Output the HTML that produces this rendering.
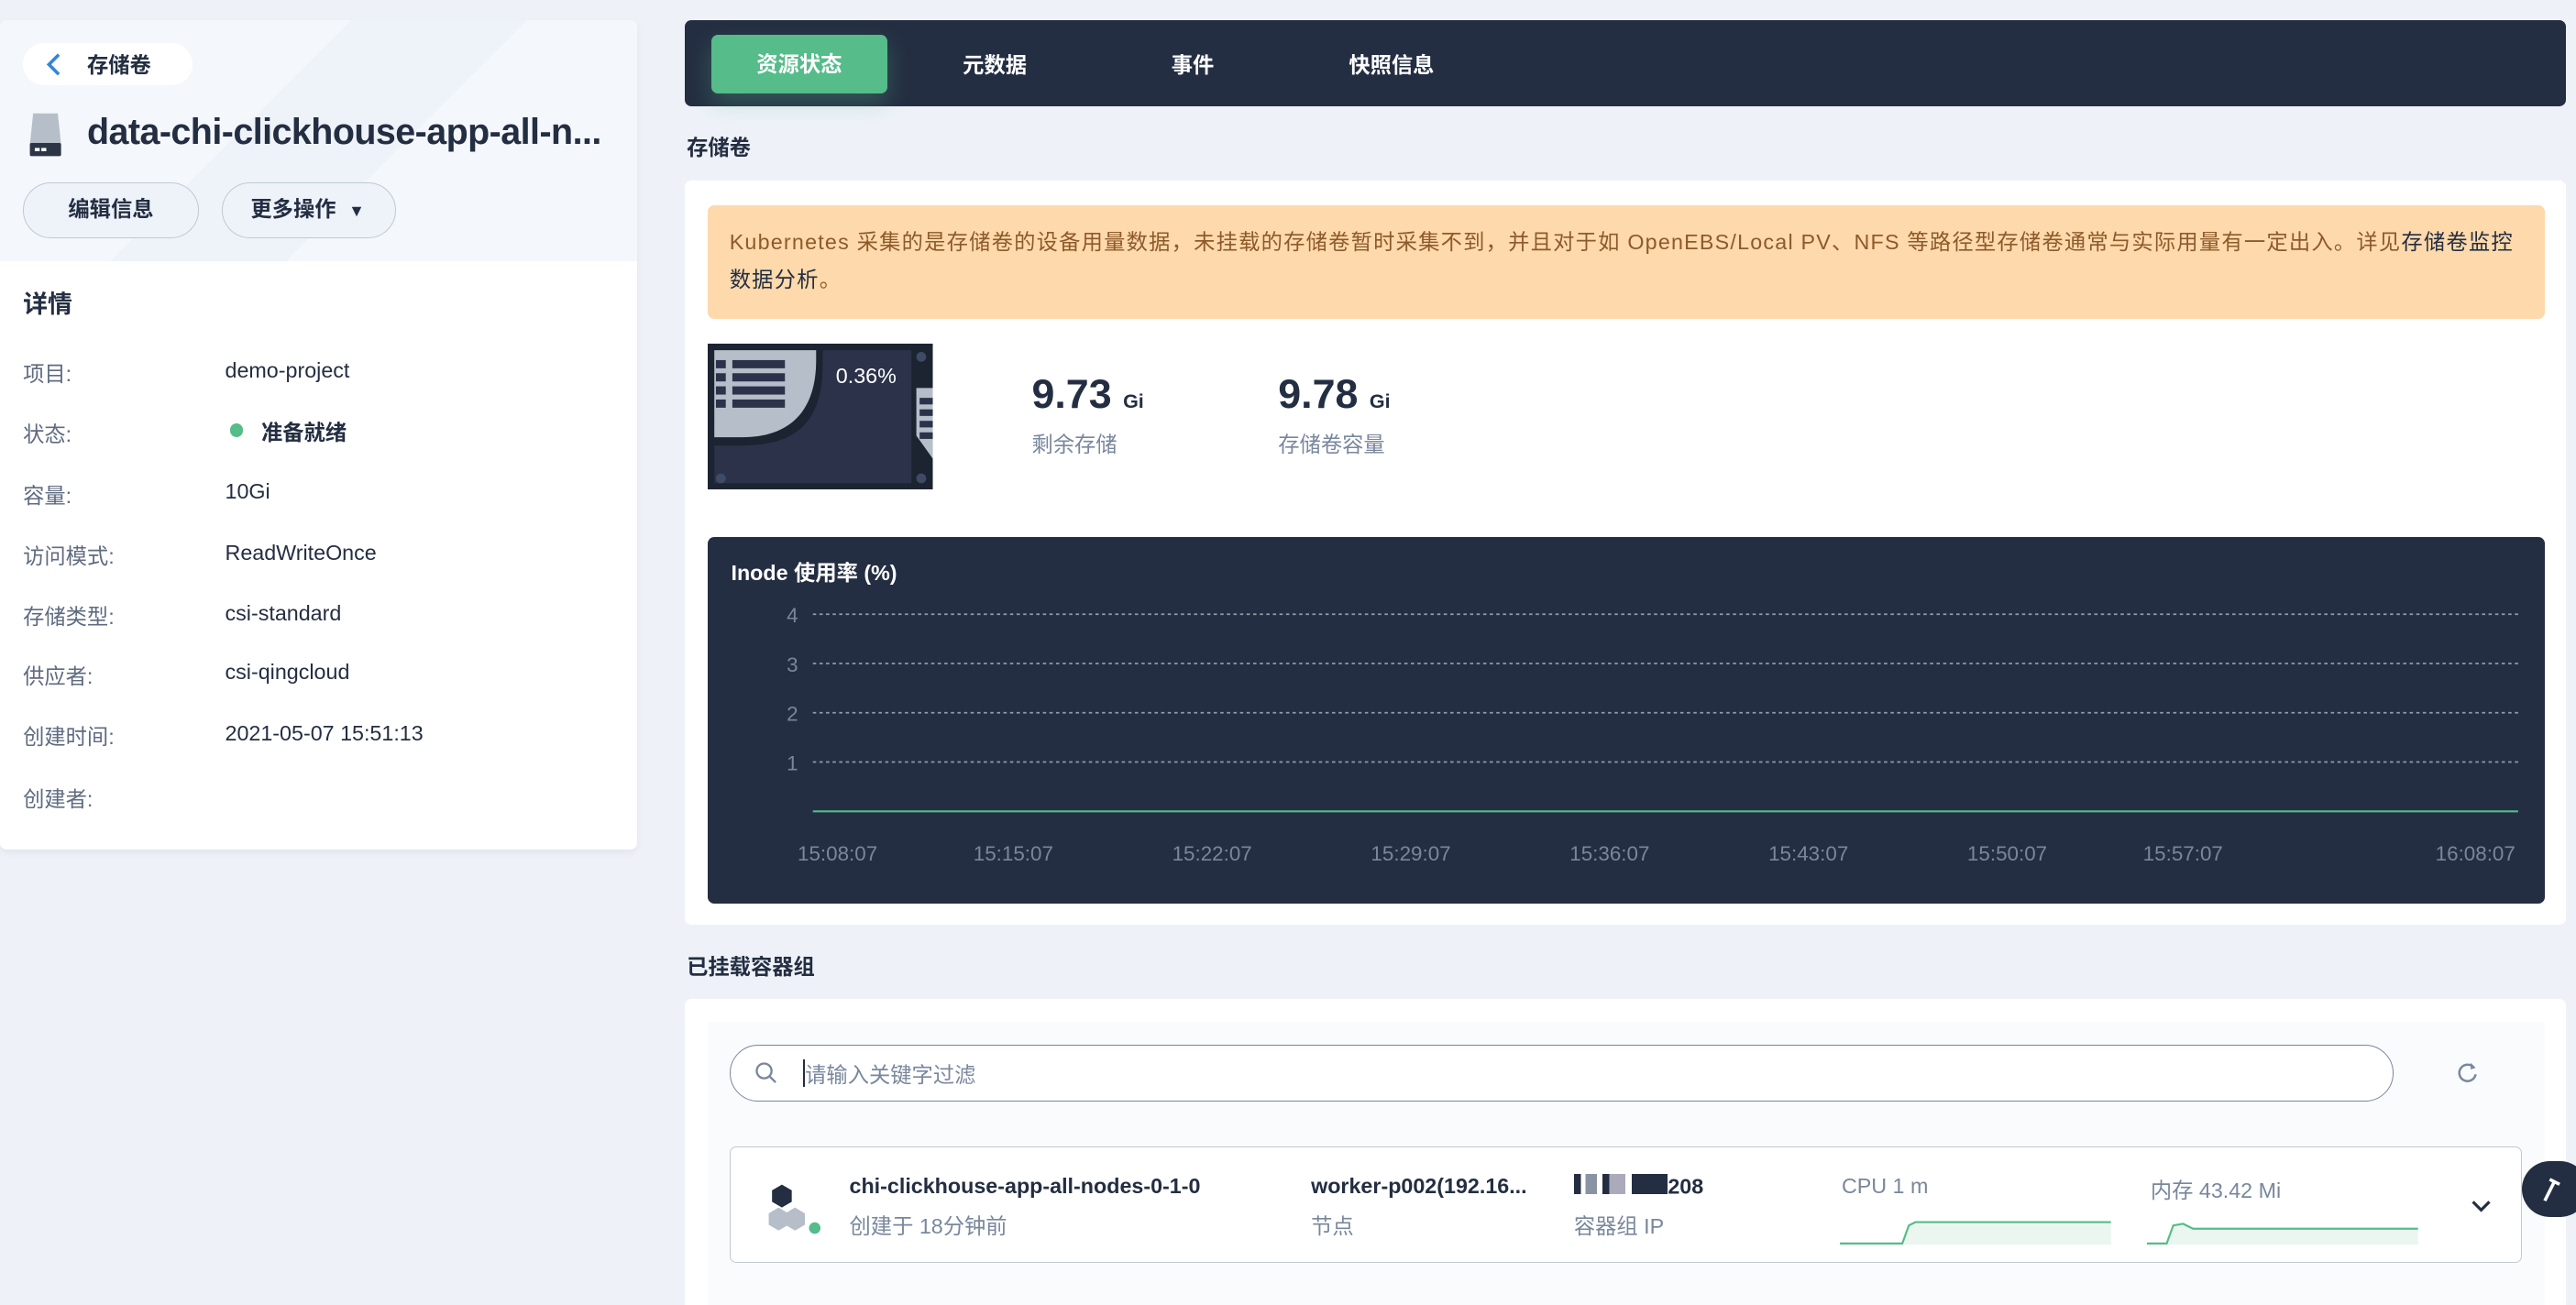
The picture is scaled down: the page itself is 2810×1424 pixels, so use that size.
<!DOCTYPE html>
<html><head><meta charset="utf-8">
<style>
*{box-sizing:border-box;margin:0;padding:0}
html,body{width:2810px;height:1424px;overflow:hidden;background:#eef2f8}
#z{zoom:1.7921;width:1568px;height:795px;position:relative;font-family:"Liberation Sans","Noto Sans CJK SC",sans-serif;color:#242e42}
.a{position:absolute;white-space:nowrap}
.lbl{font-size:13px;color:#5f6b80}
.val{font-size:13px;color:#242e42}
</style></head><body><div id="z">
<!-- left panel -->
<div class="a" style="left:0;top:12px;width:388px;height:505px;background:#fff;border-radius:4px;box-shadow:0 2px 4px rgba(36,46,66,.06);overflow:hidden">
 <div class="a" style="left:0;top:0;width:388px;height:147px;background:linear-gradient(135deg,#f4f7fb 40%,#eef3f9 40%,#eef3f9 60%,#f4f7fb 60%)"></div>
</div>
<div class="a" style="left:14px;top:26px;width:103px;height:26px;background:#fff;border-radius:13px"></div>
<svg class="a" style="left:27px;top:31px" width="12" height="16" viewBox="0 0 12 16"><path d="M9 2 L3 8 L9 14" fill="none" stroke="#3385d6" stroke-width="2"/></svg>
<div class="a" style="left:53px;top:29px;font-size:13px;font-weight:bold;color:#242e42">存储卷</div>
<svg class="a" style="left:16px;top:68px" width="24" height="28" viewBox="0 0 24 28"><path d="M4 1h15l2 19H2z" fill="#b6bec9"/><rect x="2" y="19" width="19" height="8" rx="1" fill="#2c3546"/><rect x="5" y="22" width="3" height="2" fill="#fff"/><rect x="9" y="22" width="3" height="2" fill="#fff"/></svg>
<div class="a" style="left:53px;top:68px;font-size:22px;font-weight:bold;letter-spacing:-0.3px">data-chi-clickhouse-app-all-n...</div>
<div class="a" style="left:14px;top:111px;width:107px;height:34px;border:1px solid #c1c9d1;border-radius:17px;background:#eef3fa;font-size:13px;font-weight:bold;text-align:center;line-height:32px">编辑信息</div>
<div class="a" style="left:135px;top:111px;width:106px;height:34px;border:1px solid #c1c9d1;border-radius:17px;background:#eef3fa;font-size:13px;font-weight:bold;line-height:32px;padding-left:17px">更多操作 <span style="font-size:10px;margin-left:4px">▼</span></div>
<div class="a" style="left:14px;top:173px;font-size:15px;font-weight:bold">详情</div>
<div class="a lbl" style="left:14px;top:217px">项目:</div><div class="a val" style="left:137px;top:218px">demo-project</div>
<div class="a lbl" style="left:14px;top:254px">状态:</div><div class="a" style="left:140px;top:258px;width:8px;height:8px;border-radius:50%;background:#55bc8a"></div><div class="a val" style="left:159px;top:253px;font-weight:bold">准备就绪</div>
<div class="a lbl" style="left:14px;top:291px">容量:</div><div class="a val" style="left:137px;top:292px">10Gi</div>
<div class="a lbl" style="left:14px;top:328px">访问模式:</div><div class="a val" style="left:137px;top:329px">ReadWriteOnce</div>
<div class="a lbl" style="left:14px;top:365px">存储类型:</div><div class="a val" style="left:137px;top:366px">csi-standard</div>
<div class="a lbl" style="left:14px;top:401px">供应者:</div><div class="a val" style="left:137px;top:402px">csi-qingcloud</div>
<div class="a lbl" style="left:14px;top:438px">创建时间:</div><div class="a val" style="left:137px;top:439px">2021-05-07 15:51:13</div>
<div class="a lbl" style="left:14px;top:476px">创建者:</div>

<!-- tabs -->
<div class="a" style="left:417px;top:12px;width:1145px;height:53px;background:#242e42;border-radius:4px"></div>
<div class="a" style="left:433px;top:21px;width:107px;height:36px;background:#55bc8a;border-radius:4px;color:#fff;font-size:13px;font-weight:bold;text-align:center;line-height:36px;box-shadow:0 6px 14px rgba(85,188,138,.3)">资源状态</div>
<div class="a" style="left:586px;top:29px;color:#fff;font-size:13px;font-weight:bold">元数据</div>
<div class="a" style="left:713px;top:29px;color:#fff;font-size:13px;font-weight:bold">事件</div>
<div class="a" style="left:821px;top:29px;color:#fff;font-size:13px;font-weight:bold">快照信息</div>

<div class="a" style="left:418px;top:79px;font-size:13px;font-weight:bold">存储卷</div>
<div class="a" style="left:417px;top:110px;width:1145px;height:453px;background:#fff;border-radius:4px"></div>
<div class="a" style="left:431px;top:125px;width:1118px;height:69px;background:#fed9ab;border-radius:4px;font-size:13px;color:#8d5a2a;line-height:23px;padding:11px 13px;white-space:nowrap;letter-spacing:0.68px">Kubernetes 采集的是存储卷的设备用量数据，未挂载的存储卷暂时采集不到，并且对于如 OpenEBS/Local PV、NFS 等路径型存储卷通常与实际用量有一定出入。详见<span style="color:#242e42">存储卷监控</span><br><span style="color:#242e42">数据分析</span>。</div>
<!-- disk -->
<svg class="a" style="left:431px;top:209px" width="137" height="89" viewBox="0 0 137 89"><rect width="137" height="89" fill="#1c2331"/><rect x="4" y="4" width="120" height="81" fill="#2b3249"/><path d="M4 4h66v8c0 40-20 50-50 50H4z" fill="#1c2331"/><path d="M4 4h62v6c0 30-15 47-45 47H4z" fill="#b6bec9"/><g fill="#2b3249"><rect x="5" y="10" width="6" height="5"/><rect x="15" y="10" width="32" height="5"/><rect x="5" y="18" width="6" height="5"/><rect x="15" y="18" width="32" height="5"/><rect x="5" y="26" width="6" height="5"/><rect x="15" y="26" width="32" height="5"/><rect x="5" y="34" width="6" height="5"/><rect x="15" y="34" width="32" height="5"/></g><path d="M127 27h10v43l-10-14z" fill="#b6bec9"/><g fill="#2b3249"><rect x="129" y="33" width="8" height="4"/><rect x="129" y="40" width="8" height="4"/><rect x="129" y="47" width="8" height="4"/><rect x="129" y="54" width="8" height="4"/></g><circle cx="130" cy="8" r="3" fill="#3f4a66"/><circle cx="8" cy="82" r="3" fill="#3f4a66"/><circle cx="130" cy="82" r="3" fill="#3f4a66"/><text x="78" y="24" fill="#fff" font-size="13" font-family="Liberation Sans">0.36%</text></svg>
<div class="a" style="left:628px;top:226px;font-size:25px;font-weight:bold">9.73 <span style="font-size:12px">Gi</span></div>
<div class="a" style="left:628px;top:260px;font-size:13px;color:#79879c">剩余存储</div>
<div class="a" style="left:778px;top:226px;font-size:25px;font-weight:bold">9.78 <span style="font-size:12px">Gi</span></div>
<div class="a" style="left:778px;top:260px;font-size:13px;color:#79879c">存储卷容量</div>
<!-- chart -->
<div class="a" style="left:431px;top:327px;width:1118px;height:223px;background:#242e42;border-radius:4px"></div>
<div class="a" style="left:445px;top:338px;color:#fff;font-size:13px;font-weight:bold">Inode 使用率 (%)</div>
<svg class="a" style="left:431px;top:327px" width="1118" height="223" viewBox="0 0 1118 223" font-family="Liberation Sans" font-size="12.5" fill="#79879c">
<g stroke="#c1c9d1" stroke-dasharray="2 2" stroke-width="1" opacity=".7"><line x1="64" y1="47" x2="1102" y2="47"/><line x1="64" y1="77" x2="1102" y2="77"/><line x1="64" y1="107" x2="1102" y2="107"/><line x1="64" y1="137" x2="1102" y2="137"/></g>
<line x1="64" y1="167" x2="1102" y2="167" stroke="#55bc8a" stroke-width="1.2"/>
<g text-anchor="end"><text x="55" y="52">4</text><text x="55" y="82">3</text><text x="55" y="112">2</text><text x="55" y="142">1</text></g>
<g text-anchor="middle"><text x="79" y="197">15:08:07</text><text x="186" y="197">15:15:07</text><text x="307" y="197">15:22:07</text><text x="428" y="197">15:29:07</text><text x="549" y="197">15:36:07</text><text x="670" y="197">15:43:07</text><text x="791" y="197">15:50:07</text><text x="898" y="197">15:57:07</text><text x="1076" y="197">16:08:07</text></g>
</svg>

<div class="a" style="left:418px;top:578px;font-size:13px;font-weight:bold">已挂载容器组</div>
<div class="a" style="left:417px;top:608px;width:1145px;height:200px;background:#fff;border-radius:4px"></div>
<div class="a" style="left:431px;top:622px;width:1118px;height:190px;background:#f9fbfd"></div>
<div class="a" style="left:444px;top:636px;width:1013px;height:35px;border:1px solid #79879c;border-radius:18px;background:#fff"></div>
<svg class="a" style="left:458px;top:645px" width="16" height="16" viewBox="0 0 16 16"><circle cx="7" cy="7" r="4.5" fill="none" stroke="#79879c" stroke-width="1.3"/><line x1="10.3" y1="10.3" x2="14" y2="14" stroke="#79879c" stroke-width="1.3"/></svg>
<div class="a" style="left:489px;top:645px;width:1px;height:17px;background:#242e42"></div>
<div class="a" style="left:490px;top:644px;font-size:13px;color:#79879c">请输入关键字过滤</div>
<svg class="a" style="left:1495px;top:646px" width="14" height="14" viewBox="0 0 14 14"><path d="M11 4A5 5 0 1 0 12 8" fill="none" stroke="#79879c" stroke-width="1.4"/><path d="M9 1l3 3-3 1z" fill="#79879c"/></svg>
<div class="a" style="left:444px;top:698px;width:1091px;height:71px;background:#fff;border:1px solid #c1c9d1;border-radius:4px"></div>
<svg class="a" style="left:466px;top:719px" width="36" height="36" viewBox="0 0 36 36"><path d="M10 2l6 3.5v7L10 16l-6-3.5v-7z" fill="#242e42"/><path d="M6 16l6 3.5v7L6 30l-6-3.5v-7z" transform="translate(2 0)" fill="#b6bec9"/><path d="M17 16l6 3.5v7L17 30l-6-3.5v-7z" transform="translate(1 0)" fill="#b6bec9"/><circle cx="30" cy="28.5" r="4" fill="#55bc8a" stroke="#fff" stroke-width="1"/></svg>
<div class="a" style="left:517px;top:715px;font-size:13px;font-weight:bold">chi-clickhouse-app-all-nodes-0-1-0</div>
<div class="a" style="left:517px;top:736px;font-size:13px;color:#79879c">创建于 18分钟前</div>
<div class="a" style="left:798px;top:715px;font-size:13px;font-weight:bold">worker-p002(192.16...</div>
<div class="a" style="left:798px;top:736px;font-size:13px;color:#79879c">节点</div>
<div class="a" style="left:958px;top:715px;font-size:13px;font-weight:bold"><span style="background:linear-gradient(90deg,#242e42 30%,#fff 30%,#fff 50%,#8a93a3 50%);display:inline-block;width:14px;height:12px"></span> <span style="background:linear-gradient(90deg,#242e42 30%,#aab 30%);display:inline-block;width:14px;height:12px"></span> <span style="background:#242e42;display:inline-block;width:22px;height:12px"></span>208</div>
<div class="a" style="left:958px;top:736px;font-size:13px;color:#79879c">容器组 IP</div>
<div class="a" style="left:1121px;top:715px;font-size:13px;color:#79879c">CPU 1 m</div>
<div class="a" style="left:1309px;top:714px;font-size:13px;color:#79879c">内存 43.42 Mi</div>
<svg class="a" style="left:1120px;top:742px" width="165" height="16" viewBox="0 0 165 16"><path d="M0 15H38L42 4L46 2H165V16H0z" fill="#eaf6ef"/><path d="M0 15H38L42 4L46 2H165" fill="none" stroke="#55bc8a" stroke-width="1.2"/></svg>
<svg class="a" style="left:1307px;top:742px" width="165" height="16" viewBox="0 0 165 16"><path d="M0 15H12L16 4L22 3L28 6H165V16H0z" fill="#eaf6ef"/><path d="M0 15H12L16 4L22 3L28 6H165" fill="none" stroke="#55bc8a" stroke-width="1.2"/></svg>
<svg class="a" style="left:1503px;top:729px" width="14" height="12" viewBox="0 0 14 12"><path d="M2 3l5 5 5-5" fill="none" stroke="#242e42" stroke-width="1.8"/></svg>
<div class="a" style="left:1535px;top:707px;width:40px;height:34px;border-radius:17px;background:#242e42"></div>
<svg class="a" style="left:1544px;top:713px" width="18" height="20" viewBox="0 0 18 20"><path d="M5 18L11 6M8 5l6 3" fill="none" stroke="#fff" stroke-width="2"/></svg>
</div></body></html>
